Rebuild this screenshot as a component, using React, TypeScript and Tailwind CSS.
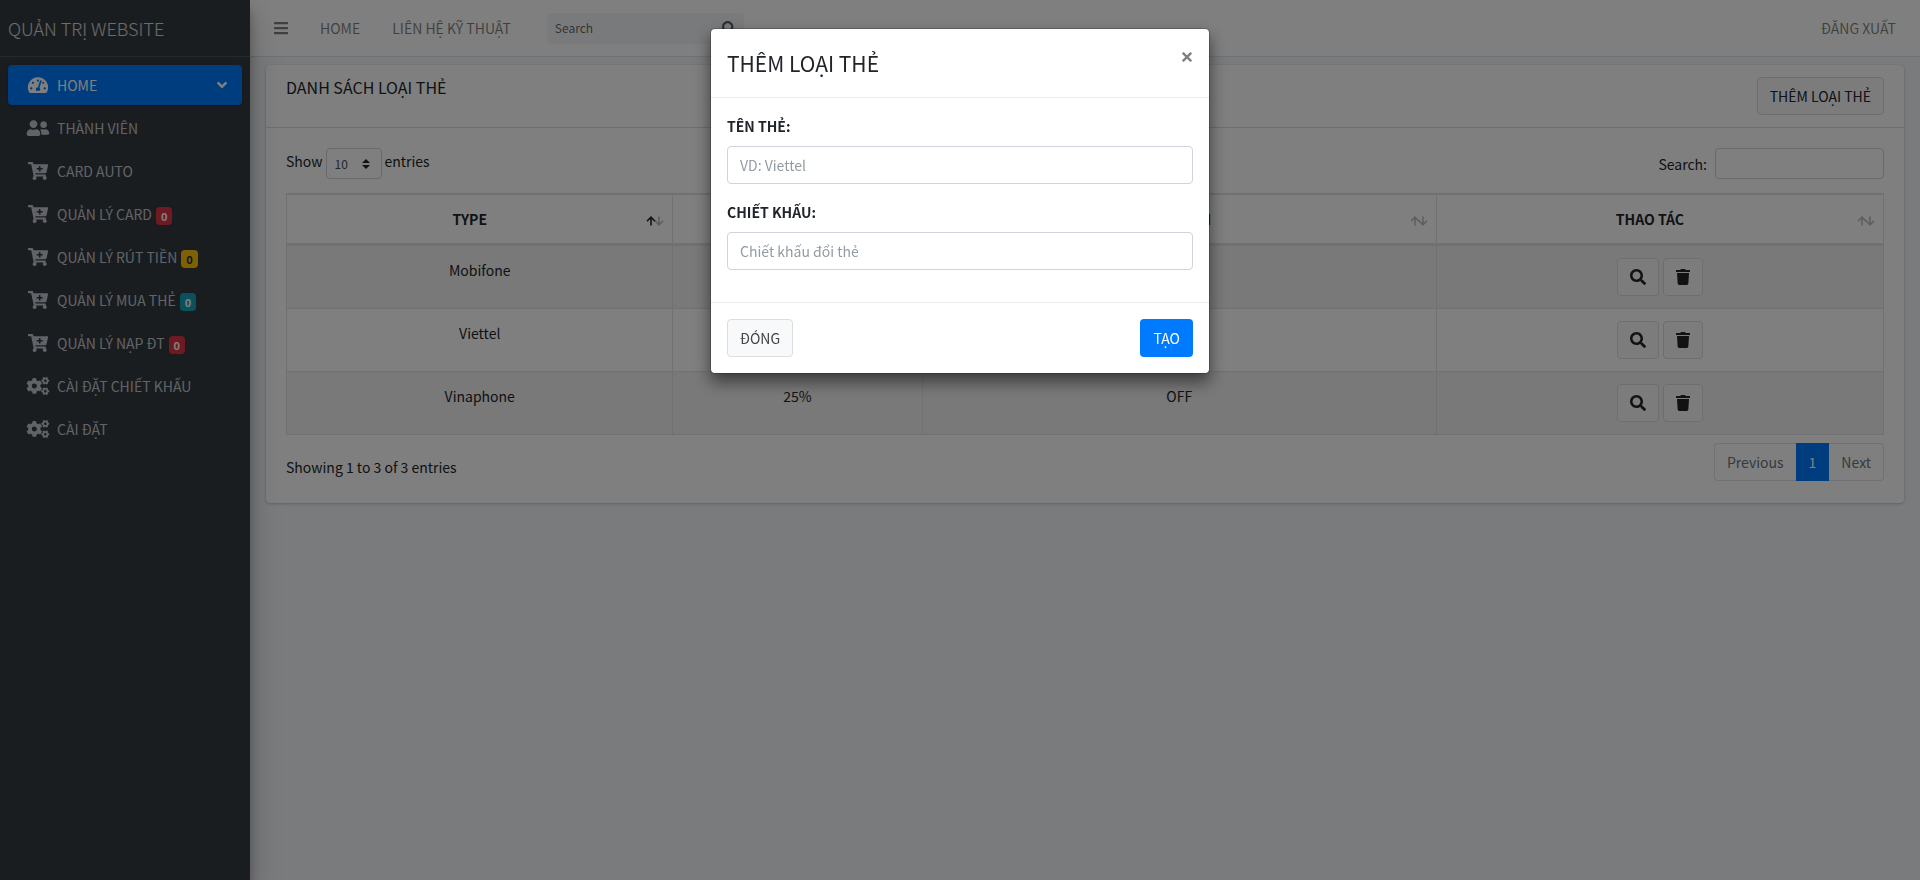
import {
  FaAngleDown,
  FaBars,
  FaCartPlus,
  FaCogs,
  FaSearch,
  FaTachometerAlt,
  FaTrash,
  FaUserFriends,
} from "react-icons/fa";
import type { IconType } from "react-icons";

interface MenuItem {
  label: string;
  icon: IconType;
  active?: boolean;
  badge?: string;
}

interface CardType {
  name: string;
  discount: string;
  status: string;
}

const menuItems: MenuItem[] = [
  { label: "HOME", icon: FaTachometerAlt, active: true },
  { label: "THÀNH VIÊN", icon: FaUserFriends },
  { label: "CARD AUTO", icon: FaCartPlus },
  { label: "QUẢN LÝ CARD", icon: FaCartPlus, badge: "bg-[#dc3545] text-white" },
  { label: "QUẢN LÝ RÚT TIỀN", icon: FaCartPlus, badge: "bg-[#ffc107] text-[#1f2d3d]" },
  { label: "QUẢN LÝ MUA THẺ", icon: FaCartPlus, badge: "bg-[#17a2b8] text-white" },
  { label: "QUẢN LÝ NẠP ĐT", icon: FaCartPlus, badge: "bg-[#dc3545] text-white" },
  { label: "CÀI ĐẶT CHIẾT KHẤU", icon: FaCogs },
  { label: "CÀI ĐẶT", icon: FaCogs },
];

const columns = ["TYPE", "CHIẾT KHẤU", "TRẠNG THÁI", "THAO TÁC"];

const cardTypes: CardType[] = [
  { name: "Mobifone", discount: "25%", status: "OFF" },
  { name: "Viettel", discount: "25%", status: "OFF" },
  { name: "Vinaphone", discount: "25%", status: "OFF" },
];

const Sidebar = () => (
  <aside className="relative z-10 w-[250px] shrink-0 bg-[#343a40] shadow-[0_14px_28px_rgba(0,0,0,0.25),0_10px_10px_rgba(0,0,0,0.22)]">
    <a
      href="#"
      className="flex h-[57px] items-center border-b border-[#4b545c] px-2 text-[18px] font-light text-white/80"
    >
      QUẢN TRỊ WEBSITE
    </a>
    <nav className="p-2">
      <ul className="flex flex-col gap-[3px]">
        {menuItems.map(({ label, icon: Icon, active, badge }) => (
          <li key={label}>
            <a
              href="#"
              className={
                active
                  ? "flex h-10 items-center rounded bg-[#007bff] px-4 text-white shadow"
                  : "flex h-10 items-center rounded px-4 text-[#c2c7d0]"
              }
            >
              <Icon className="mr-1 h-[18px] w-7 shrink-0" />
              <span className="ml-px">{label}</span>
              {badge && (
                <span
                  className={`${badge} ml-1 mt-1 rounded px-[5px] text-[11px] font-bold leading-[18px]`}
                >
                  0
                </span>
              )}
              {active && <FaAngleDown className="-mr-1 ml-auto h-4 w-4" />}
            </a>
          </li>
        ))}
      </ul>
    </nav>
  </aside>
);

const Navbar = () => (
  <header className="flex h-[57px] items-center border-b border-[#dee2e6] bg-white px-2 text-black/50">
    <button type="button" aria-label="Menu" className="px-4">
      <FaBars className="h-4 w-[14px]" />
    </button>
    <a href="#" className="px-4">
      HOME
    </a>
    <a href="#" className="px-4">
      LIÊN HỆ KỸ THUẬT
    </a>
    <form className="ml-5 flex h-[31px] w-[197px] items-center rounded bg-[#f2f4f6]">
      <input
        type="search"
        aria-label="Search"
        placeholder="Search"
        className="min-w-0 flex-1 bg-transparent px-2 text-[12px] outline-none placeholder:text-black/60"
      />
      <button type="button" aria-label="Search" className="px-2 text-black/60">
        <FaSearch className="h-[14px] w-[14px]" />
      </button>
    </form>
    <a href="#" className="ml-auto px-4">
      ĐĂNG XUẤT
    </a>
  </header>
);

const SortArrows = ({ sorted }: { sorted: boolean }) => (
  <svg
    viewBox="0 0 18 10"
    fill="none"
    stroke="currentColor"
    strokeWidth="1.6"
    className="absolute right-2 top-[21px] h-[10px] w-[18px]"
  >
    <path d="M5 9.5V1.5M1 5.2L5 1.2L9 5.2" opacity={sorted ? 1 : 0.3} />
    <path d="M13 0.5V8.5M9 4.8L13 8.8L17 4.8" opacity="0.3" />
  </svg>
);

const CardTable = () => (
  <table className="w-full table-fixed border-separate border-spacing-0 border-b border-r border-t border-[#dee2e6] text-center">
    <colgroup>
      <col className="w-[24.2%]" />
      <col className="w-[15.6%]" />
      <col className="w-[32.2%]" />
      <col className="w-[28%]" />
    </colgroup>
    <thead>
      <tr>
        {columns.map((column, index) => (
          <th
            key={column}
            className="relative border-b-2 border-l border-t border-[#dee2e6] py-3 pl-3 pr-8 font-bold"
          >
            {column}
            <SortArrows sorted={index === 0} />
          </th>
        ))}
      </tr>
    </thead>
    <tbody>
      {cardTypes.map((card) => (
        <tr key={card.name} className="align-top odd:bg-black/5">
          <td className="border-l border-t border-[#dee2e6] p-3">{card.name}</td>
          <td className="border-l border-t border-[#dee2e6] p-3">{card.discount}</td>
          <td className="border-l border-t border-[#dee2e6] p-3">{card.status}</td>
          <td className="border-l border-t border-[#dee2e6] p-3">
            <div className="flex justify-center gap-1">
              <button
                type="button"
                aria-label="Xem"
                className="flex h-[38px] items-center rounded border border-[#ddd] bg-[#f8f9fa] px-3"
              >
                <FaSearch className="h-4 w-4" />
              </button>
              <button
                type="button"
                aria-label="Xóa"
                className="flex h-[38px] items-center rounded border border-[#ddd] bg-[#f8f9fa] px-3"
              >
                <FaTrash className="h-4 w-[14px]" />
              </button>
            </div>
          </td>
        </tr>
      ))}
    </tbody>
  </table>
);

const CardPanel = () => (
  <section className="rounded bg-white shadow-[0_0_1px_rgba(0,0,0,0.125),0_1px_3px_rgba(0,0,0,0.2)]">
    <div className="flex items-start justify-between border-b border-black/[0.125] px-5 py-3">
      <h3 className="text-[16px] leading-5">DANH SÁCH LOẠI THẺ</h3>
      <button
        type="button"
        className="h-[38px] rounded border border-[#ddd] bg-[#f8f9fa] px-3 text-[#212529]"
      >
        THÊM LOẠI THẺ
      </button>
    </div>
    <div className="px-5 pb-[22px] pt-5">
      <div className="mb-[14px] flex items-start justify-between">
        <label className="flex items-start gap-[3px]">
          <span className="pt-px">Show</span>
          <span className="relative">
            <select className="block h-[31px] w-14 appearance-none rounded border border-[#ced4da] bg-white px-2 text-[12px] text-[#495057]">
              <option>10</option>
              <option>25</option>
              <option>50</option>
              <option>100</option>
            </select>
            <svg
              viewBox="0 0 8 10"
              fill="currentColor"
              className="pointer-events-none absolute right-3 top-[11px] h-[10px] w-2"
            >
              <path d="M4 0L8 4H0zM4 10L0 6h8z" />
            </svg>
          </span>
          <span className="pt-px">entries</span>
        </label>
        <label className="flex items-center gap-2">
          Search:
          <input
            type="search"
            className="h-[31px] w-[169px] rounded border border-[#ced4da] bg-white px-2"
          />
        </label>
      </div>
      <CardTable />
      <div className="mt-2 flex items-start justify-between">
        <p className="pt-3">Showing 1 to 3 of 3 entries</p>
        <div className="flex h-[38px] text-[#6c757d]">
          <button type="button" className="rounded-l border border-r-0 border-[#dee2e6] px-3">
            Previous
          </button>
          <button type="button" className="bg-[#007bff] px-[13px] text-white">
            1
          </button>
          <button type="button" className="rounded-r border border-l-0 border-[#dee2e6] px-3">
            Next
          </button>
        </div>
      </div>
    </div>
  </section>
);

const AddCardModal = () => (
  <div className="fixed inset-0 z-20 bg-black/50">
    <div
      role="dialog"
      aria-labelledby="modal-title"
      className="mx-auto mt-7 max-w-[500px] rounded-[5px] border border-black/20 bg-white bg-clip-padding shadow-[0_8px_16px_rgba(0,0,0,0.5)]"
    >
      <div className="flex items-start justify-between border-b border-[#e9ecef] p-4">
        <h4 id="modal-title" className="text-[21px] leading-9">
          THÊM LOẠI THẺ
        </h4>
        <button type="button" aria-label="Close" className="px-px pt-[7px] text-black/50">
          <svg viewBox="0 0 10 10" stroke="currentColor" strokeWidth="2.4" className="h-[10px] w-[10px]">
            <path d="M0.8 0.8L9.2 9.2M9.2 0.8L0.8 9.2" />
          </svg>
        </button>
      </div>
      <div className="flex flex-col gap-4 px-4 pb-8 pt-4">
        <label className="flex flex-col gap-2">
          <span className="font-bold">TÊN THẺ:</span>
          <input
            type="text"
            placeholder="VD: Viettel"
            className="h-[38px] rounded border border-[#ced4da] px-3 placeholder:text-[#939ba2]"
          />
        </label>
        <label className="flex flex-col gap-2">
          <span className="font-bold">CHIẾT KHẤU:</span>
          <input
            type="text"
            placeholder="Chiết khấu đổi thẻ"
            className="h-[38px] rounded border border-[#ced4da] px-3 placeholder:text-[#939ba2]"
          />
        </label>
      </div>
      <div className="flex justify-between border-t border-[#e9ecef] p-4">
        <button
          type="button"
          className="h-[38px] rounded border border-[#ddd] bg-[#f8f9fa] px-3 text-[#444]"
        >
          ĐÓNG
        </button>
        <button type="button" className="h-[38px] rounded bg-[#007bff] px-[13px] text-white">
          TẠO
        </button>
      </div>
    </div>
  </div>
);

const App = () => (
  <div className="flex min-h-screen bg-[#f4f6f9] font-['Noto_Sans_CJK_SC',sans-serif] text-[14px] leading-6 text-[#212529]">
    <Sidebar />
    <div className="min-w-0 flex-1">
      <Navbar />
      <main className="px-4 py-2">
        <CardPanel />
      </main>
    </div>
    <AddCardModal />
  </div>
);

export default App;
